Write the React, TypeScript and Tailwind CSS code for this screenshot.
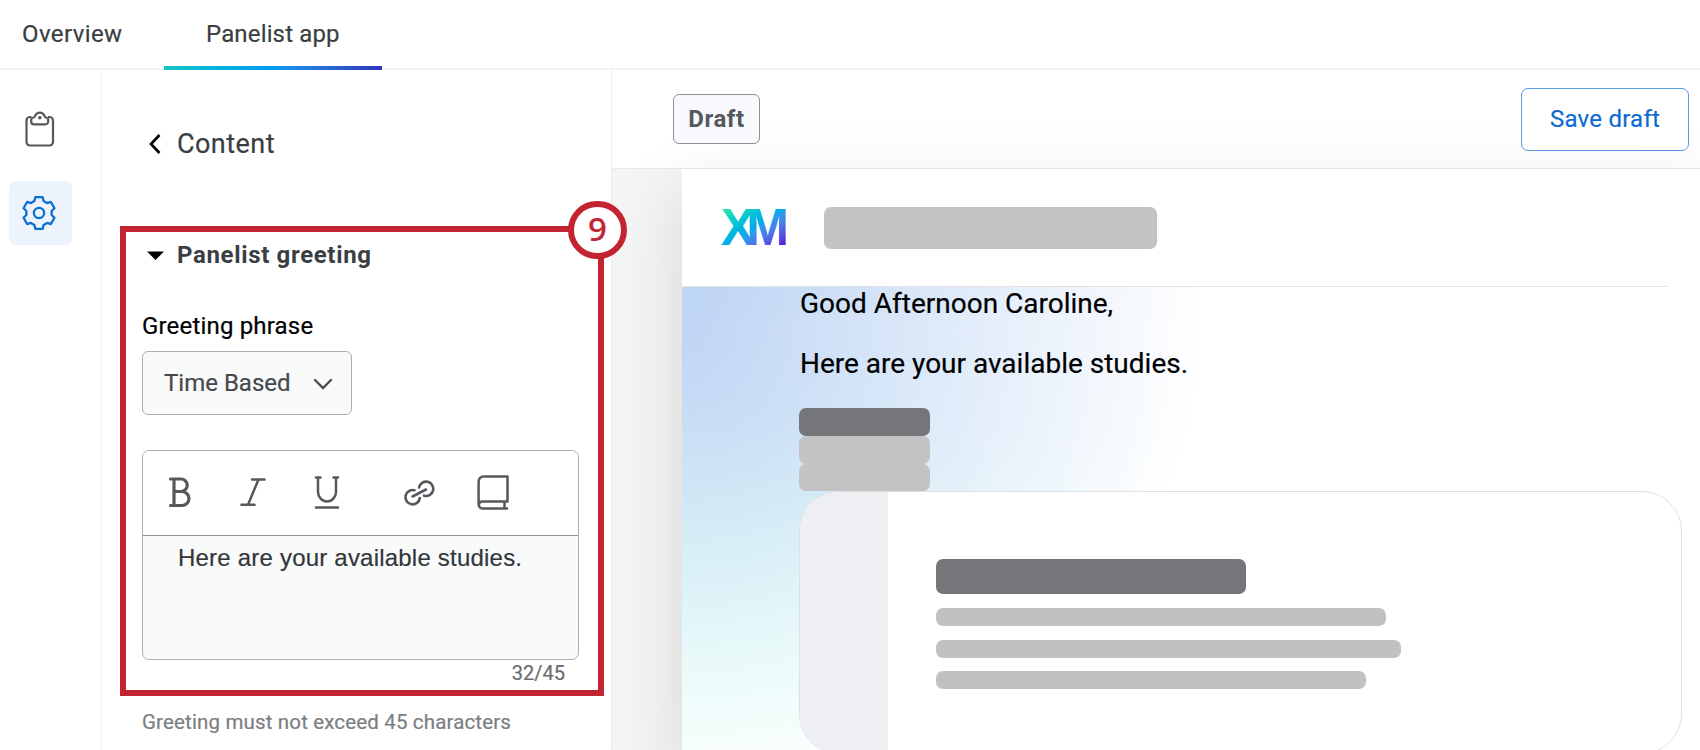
import type { ReactNode } from 'react'

const studyLines = ['w-[450px] mt-[14px]', 'w-[465px] mt-[14.100px]', 'w-[430px] mt-[13px]']

// six teeth around the centre, each one an outer edge followed by a valley
const gearPoints = [0, 60, 120, 180, 240, 300]
  .flatMap((tooth) =>
    [
      [-13, 16.2],
      [13, 16.2],
      [21, 12.8],
      [39, 12.8],
    ].map(([offset, radius]) => {
      const angle = ((tooth + offset - 90) * Math.PI) / 180
      return `${(17 + radius * Math.cos(angle)).toFixed(2)},${(18 + radius * Math.sin(angle)).toFixed(2)}`
    }),
  )
  .join(' ')

function ClipboardIcon() {
  return (
    <svg className="h-[36px] w-[30px]" viewBox="0 0 30 36" fill="none" stroke="#55585c" strokeWidth="2.200" strokeLinejoin="round">
      <path d="M6.500 6H5a3.500 3.500 0 0 0-3.500 3.500v21.500a3.500 3.500 0 0 0 3.500 3.500h19.500a3.500 3.500 0 0 0 3.500-3.500V9.500A3.500 3.500 0 0 0 24.500 6H23" />
      <path d="M7.500 7C9.600 6.800 9.800 5.800 10.300 4.500a4.900 4.900 0 0 1 9 0C19.800 5.800 20 6.800 22 7q1.200.2 1.200 1.500V10.500a2.800 2.800 0 0 1-2.800 2.800H9a2.800 2.800 0 0 1-2.800-2.800V8.500Q6.200 7.200 7.500 7Z" />
      <circle cx="14.800" cy="6.800" r="1.800" fill="#55585c" stroke="none" />
    </svg>
  )
}

function GearIcon() {
  return (
    <svg className="h-[36px] w-[34px]" viewBox="0 0 34 36" fill="none" stroke="#0b6ed0" strokeWidth="2.300" strokeLinejoin="round">
      <polygon points={gearPoints} />
      <circle cx="17" cy="18" r="5.100" />
    </svg>
  )
}

function BoldIcon() {
  return (
    <svg className="h-[32px] w-[24px]" viewBox="0 0 24 32" fill="none" stroke="#55585c" strokeWidth="3.200" strokeLinecap="round" strokeLinejoin="round">
      <path d="M2.500 2H13a6 6 0 0 1 0 12.500H6M14 14.500a7 7 0 0 1 0 14H2.500M6 2v26.500" />
    </svg>
  )
}

function ItalicIcon() {
  return (
    <svg className="h-[30px] w-[26px]" viewBox="0 0 26 30" fill="none" stroke="#55585c" strokeWidth="2.500" strokeLinecap="round">
      <path d="M12 1.500h12.500M1.500 26.800h13M18.500 1.500 8 26.800" />
    </svg>
  )
}

function UnderlineIcon() {
  return (
    <svg className="h-[34px] w-[26px]" viewBox="0 0 26 34" fill="none" stroke="#55585c" strokeWidth="2.500" strokeLinecap="round">
      <path d="M2 1.500h4.500M19.500 1.500h4.500M4 1.500v14.500a9 9.500 0 0 0 18 0V1.500M2 31.500h22" />
    </svg>
  )
}

function LinkIcon() {
  return (
    <svg className="h-[28px] w-[34px]" viewBox="0 0 34 28" fill="none" stroke="#55585c" strokeWidth="2.600" strokeLinecap="round">
      <path d="M12.500 11.200A7.200 7.200 0 1 0 17.800 19" />
      <path d="M10.500 17.500 24 10.500" />
      <path d="M17 8.500A7.200 7.200 0 1 1 22 16.700" />
    </svg>
  )
}

function BookIcon() {
  return (
    <svg className="h-[36px] w-[32px]" viewBox="0 0 32 36" fill="none" stroke="#55585c" strokeWidth="2.500" strokeLinejoin="round" strokeLinecap="round">
      <path d="M30 26.500H5a3.500 3.500 0 0 0-3.200 3.500 3.500 3.500 0 0 0 3.500 3.500H30M27.500 27V33M1.600 29.500V6.500a5 5 0 0 1 5-5H30.500V26.500" />
    </svg>
  )
}

function Callout({ children }: { children: ReactNode }) {
  return (
    <div className="pointer-events-none absolute top-[226px] left-[120px] z-20 h-[470px] w-[484px] border-[6px] border-[#c32432]">
      <div className="absolute -top-[31px] -right-[29px] flex h-[58px] w-[59px] items-center justify-center rounded-full border-[6px] border-[#c32432] bg-white pb-[3px] font-['Noto_Sans'] text-[33px] leading-none font-medium text-[#c32432]">
        {children}
      </div>
    </div>
  )
}

function Tabs() {
  return (
    <nav className="flex h-[70px] shrink-0 border-b-2 border-[#f3f3f4] text-[24px] leading-[28px] text-[#3a3e42]">
      <div className="w-[164px] pt-[20px] pl-[22px]">
        <span className="tracking-[0.400px] whitespace-nowrap">Overview</span>
      </div>
      <div className="flex h-[70px] w-[218px] flex-col justify-between pt-[20px]">
        <span className="pl-[42px] tracking-[0.150px] whitespace-nowrap">Panelist app</span>
        <div className="h-[4px] bg-linear-to-r from-[#17c5c5] via-[#079cf0] to-[#2f35b8]" />
      </div>
    </nav>
  )
}

function Sidebar() {
  return (
    <aside className="flex w-[102px] shrink-0 flex-col border-r-2 border-[#f6f6f7] pt-[41px] pl-[9px]">
      <div className="flex w-[61px] justify-center">
        <ClipboardIcon />
      </div>
      <div className="mt-[34px] flex h-[64px] w-[63px] items-center justify-center rounded-[7px] bg-[#edf3fd] pr-[3px]">
        <GearIcon />
      </div>
    </aside>
  )
}

function Editor() {
  return (
    <div className="mt-[35px] h-[210px] w-[437px] overflow-hidden rounded-[7px] border-[1.500px] border-[#a9b0b5] bg-[#f9fbfa]">
      <div className="flex h-[85px] items-center border-b border-[#8c9299] bg-white pl-[25px]">
        <BoldIcon />
        <span className="ml-[48px]"><ItalicIcon /></span>
        <span className="ml-[48px]"><UnderlineIcon /></span>
        <span className="ml-[62px]"><LinkIcon /></span>
        <span className="ml-[41px]"><BookIcon /></span>
      </div>
      <p className="pt-[8px] pl-[35px] font-['Liberation_Sans'] text-[24px] leading-[28px] tracking-[0.210px] whitespace-nowrap text-[#33363b]">
        <span>Here are your available studies.</span>
      </p>
    </div>
  )
}

function ContentPanel() {
  return (
    <section className="flex w-[510px] shrink-0 flex-col border-r border-[#ececed] pl-[40px]">
      <div className="mt-[58px] flex h-[32px] items-center pl-[6px]">
        <svg className="h-[20px] w-[13px]" viewBox="0 0 13 20" fill="none" stroke="#000" strokeWidth="2.700">
          <path d="M11.500 1 3 10l8.500 9" />
        </svg>
        <span className="ml-[16px] text-[27px] leading-[32px] tracking-[0.450px] text-[#3a3e42]">Content</span>
      </div>
      <div className="mt-[81px] flex h-[28px] items-center pl-[5px]">
        <svg className="h-[9px] w-[17px]" viewBox="0 0 17 9">
          <path d="M0 .5h17L8.500 9Z" fill="#000" />
        </svg>
        <h2 className="ml-[13px] text-[24px] leading-[28px] font-bold tracking-[0.650px] whitespace-nowrap text-[#3a3e42] [-webkit-text-stroke:0px]">Panelist greeting</h2>
      </div>
      <label className="mt-[43px] text-[24px] leading-[28px] tracking-[0.180px] text-black"><span>Greeting phrase</span></label>
      <div className="mt-[11px] flex h-[64px] w-[210px] items-center rounded-[6px] border-[1.500px] border-[#adaeaf] bg-[#f9fafa] pl-[21px] text-[24px] leading-[28px] text-[#45494d]">
        <span className="w-[126px] whitespace-nowrap">Time Based</span>
        <svg className="mt-[2px] ml-[23px] h-[12px] w-[20px]" viewBox="0 0 20 12" fill="none" stroke="#4b4f54" strokeWidth="2.400" strokeLinecap="round">
          <path d="m2 2 8 8 8-8" />
        </svg>
      </div>
      <Editor />
      <p className="mt-[1px] pr-[46px] text-right text-[20px] leading-[24px] text-[#686b6f]"><span>32/45</span></p>
      <p className="mt-[25px] text-[20.500px] leading-[24px] tracking-[0.150px] whitespace-nowrap text-[#7b7e82]"><span>Greeting must not exceed 45 characters</span></p>
    </section>
  )
}

function StudyCard() {
  return (
    <div className="flex h-[263px] w-[883px] overflow-hidden rounded-[40px] border border-[#dfe0e2] bg-white">
      <div className="w-[88px] bg-[#eeeff3]" />
      <div className="pt-[67px] pl-[48px]">
        <div className="h-[35px] w-[310px] rounded-[7px] bg-[#757679]" />
        {studyLines.map((line) => (
          <div key={line} className={`h-[18px] rounded-[7px] bg-[#c1c1c1] ${line}`} />
        ))}
      </div>
    </div>
  )
}

function Preview() {
  return (
    <main className="flex min-w-0 flex-1 flex-col overflow-hidden bg-[#f5f5f5]">
      <div className="flex h-[99px] shrink-0 items-start justify-between border-b border-[#e9e9ea] bg-white pr-[11px] pl-[61px]">
        <div className="relative z-10 mt-[24px] flex h-[50px] w-[87px] items-center justify-center rounded-[6px] border-[1.500px] border-[#8d9095] bg-[#f7f9fc] text-[24px] font-bold tracking-[0.600px] text-[#55585d] [-webkit-text-stroke:0px]">
          <span>Draft</span>
        </div>
        <button className="relative z-10 mt-[18px] h-[63px] w-[168px] rounded-[7px] border-[1.500px] border-[#569ae2] bg-white pb-[2px] text-[24px] tracking-[0.250px] text-[#0f6bd2]">
          <span>Save draft</span>
        </button>
      </div>
      <div className="ml-[70px] flex flex-1 flex-col bg-white shadow-[0_24px_70px_rgba(0,0,0,0.13)]">
        <header className="mr-[32px] flex h-[118px] shrink-0 items-center border-b border-[#e2e2e3] pl-[39px]">
          <div className="w-[103px] pt-[2px]">
            <span className="inline-block bg-linear-to-br from-[#25e0b0] from-10% via-[#05a8ee] to-[#5a1fdc] to-90% bg-clip-text pr-[6px] font-['Liberation_Sans'] text-[51px] leading-[44px] font-bold tracking-[-8.500px] text-transparent">XM</span>
          </div>
          <div className="h-[42px] w-[333px] rounded-[7px] bg-[#c3c3c3]" />
        </header>
        <div className="flex-1 bg-[radial-gradient(ellipse_520px_470px_at_0_43px,transparent,white),linear-gradient(180deg,#b8d2f3,#bfd5f4_9%,#bad6f3_30%,#b6daf0_44%,#b4e2ef_63%,#b3edec_80%,#b0f2ec_92%)] pl-[117px]">
          <p className="pt-[1px] pl-px text-[28px] leading-[32px] whitespace-nowrap text-black"><span>Good Afternoon Caroline,</span></p>
          <p className="mt-[28px] pl-px text-[28px] leading-[32px] whitespace-nowrap text-black"><span>Here are your available studies.</span></p>
          <div className="mt-[28px] h-[28px] w-[131px] rounded-[7px] bg-[#757679]" />
          <div className="h-[28px] w-[131px] rounded-[7px] bg-[#c3c3c3]" />
          <div className="h-[27px] w-[131px] rounded-[7px] bg-[#c3c3c3]" />
          <StudyCard />
        </div>
      </div>
    </main>
  )
}

export default function App() {
  return (
    <div className="relative flex h-[750px] w-[1700px] flex-col overflow-hidden bg-white font-['Roboto',sans-serif] [-webkit-text-stroke:0.200px]">
      <Tabs />
      <div className="flex min-h-0 flex-1">
        <Sidebar />
        <ContentPanel />
        <Preview />
      </div>
      <Callout>9</Callout>
    </div>
  )
}
